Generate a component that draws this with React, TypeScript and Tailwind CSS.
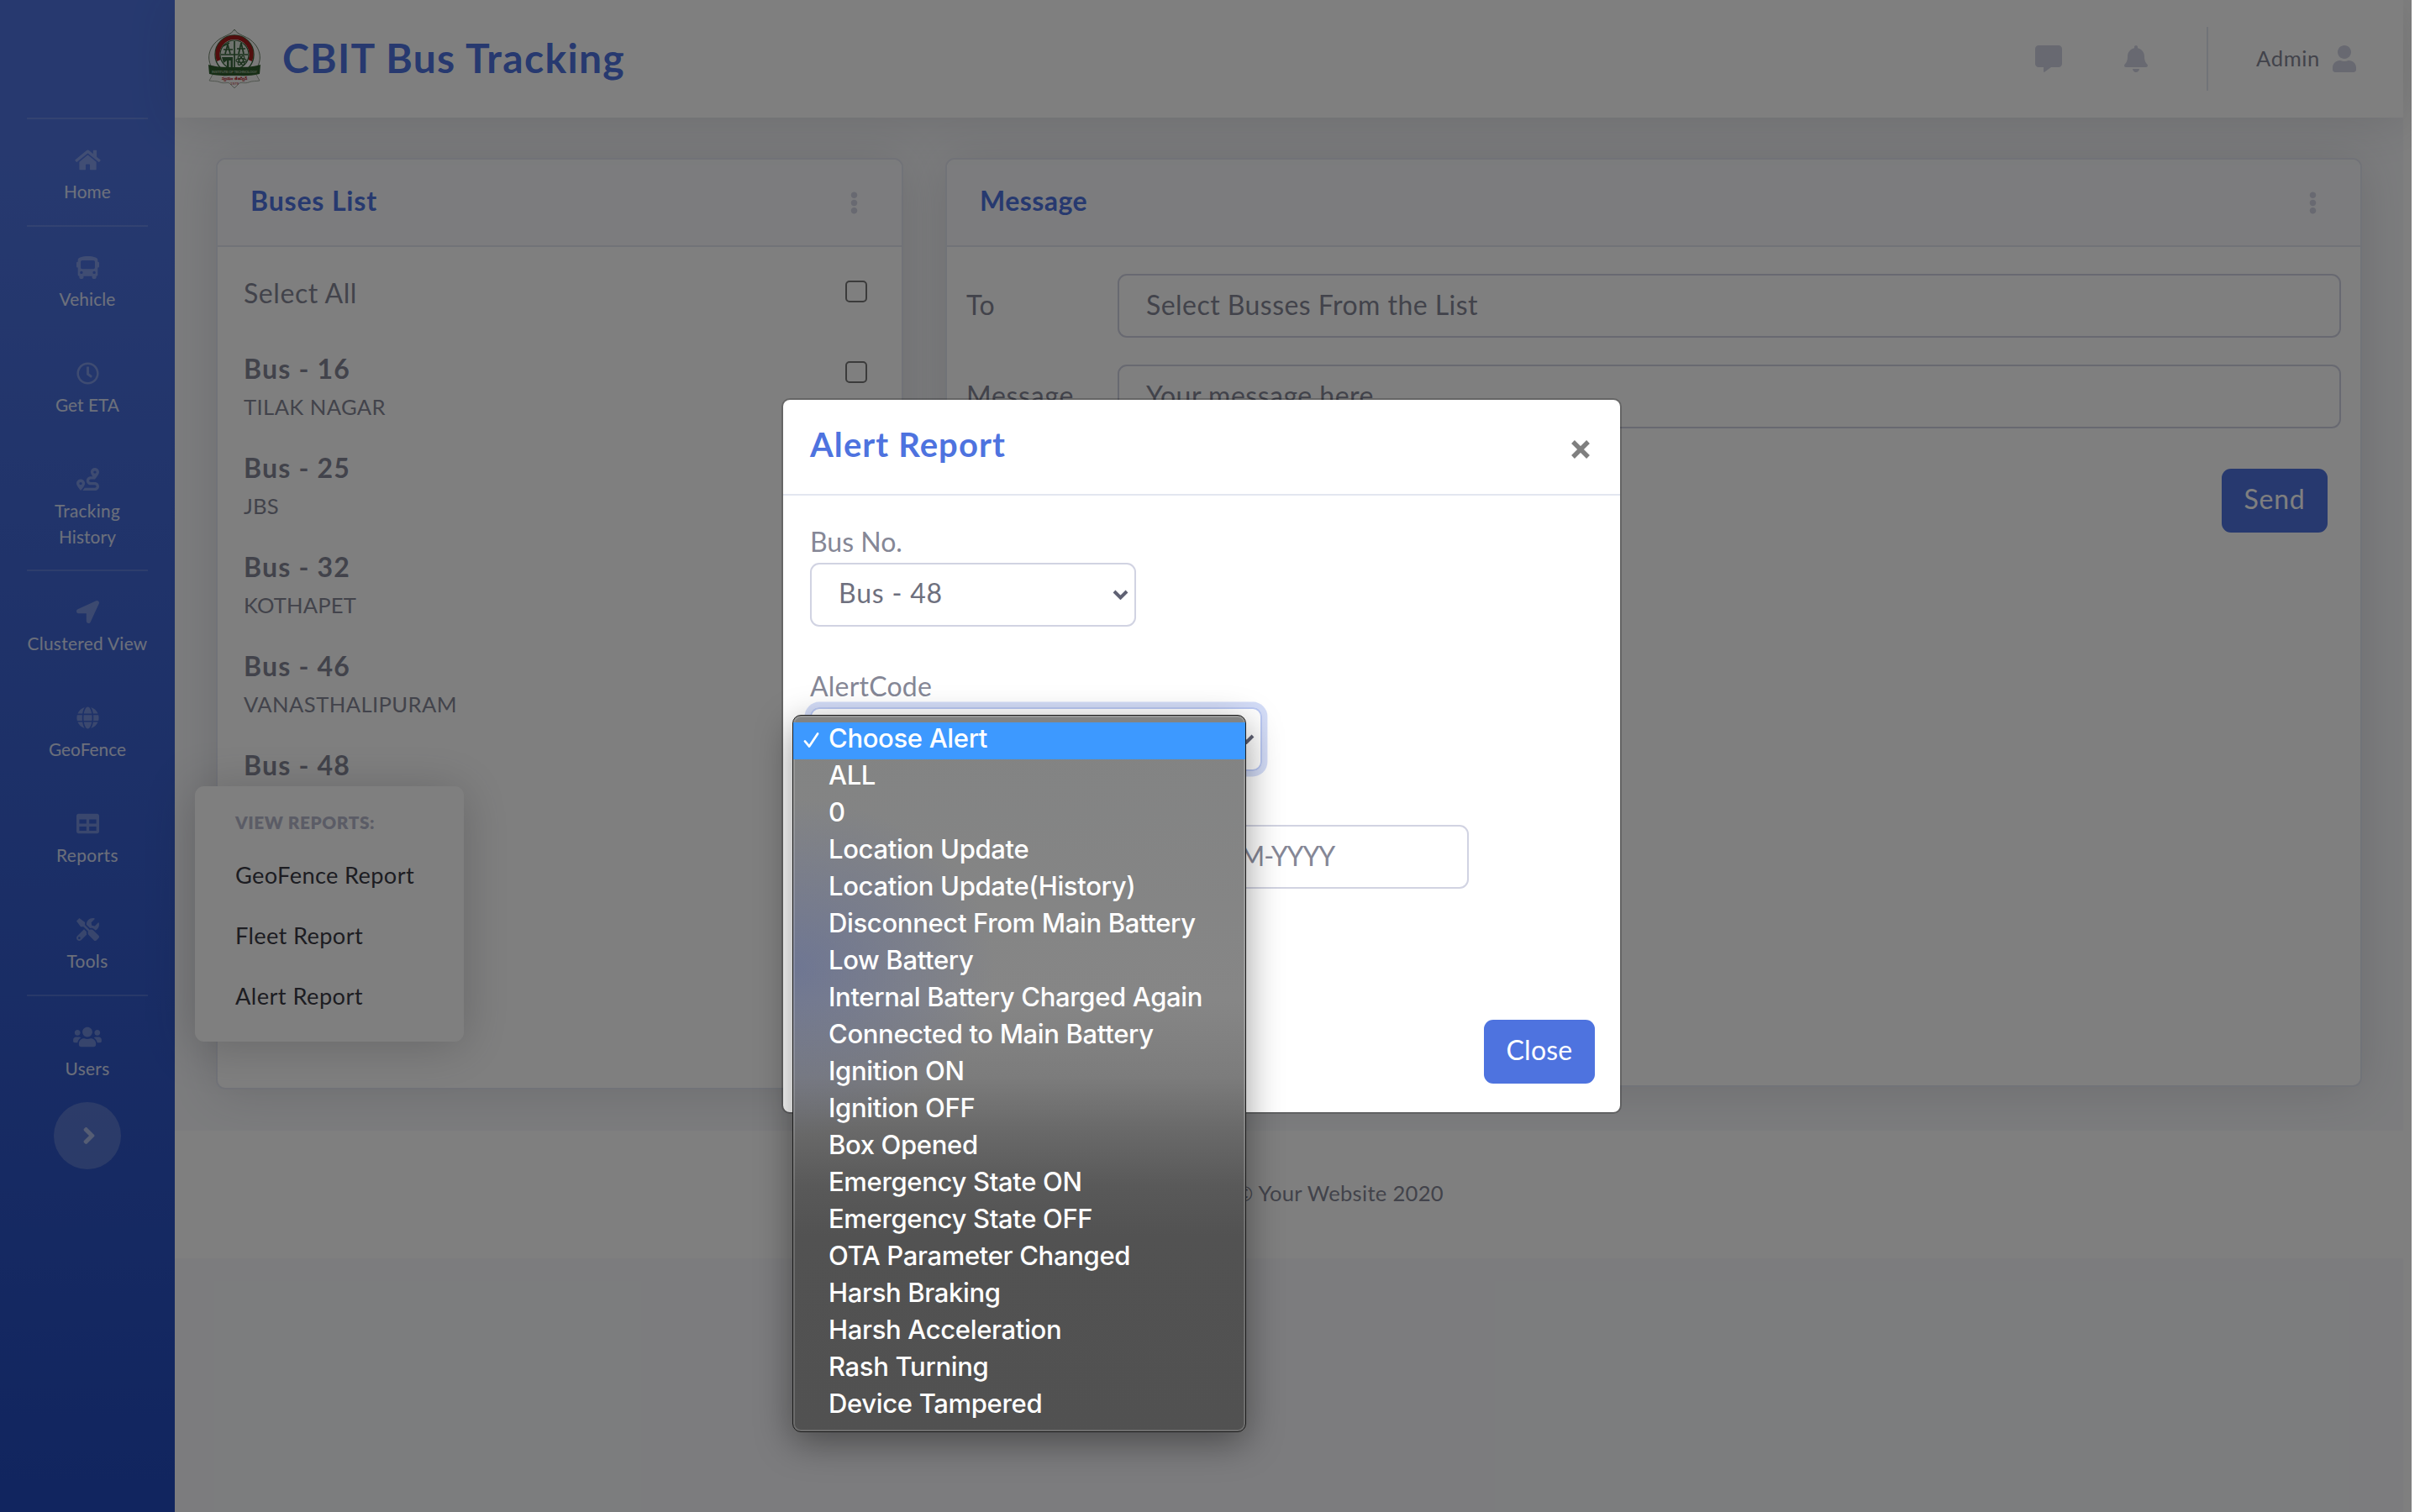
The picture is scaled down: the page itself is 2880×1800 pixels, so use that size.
import type { ReactNode } from "react";
import {
  FaAngleRight, FaBell, FaBus, FaCommentAlt, FaEllipsisV, FaGlobe, FaHome, FaLocationArrow,
  FaRegClock, FaRoute, FaTable, FaTools, FaUser, FaUsers,
} from "react-icons/fa";

function Logo() {
  return (
    <svg className="h-[72px] w-[66px]" viewBox="0 0 66 72">
      <path d="M33 1 C37 7 43 8 50 12 C62 20 68 34 59 48 L54 55 H12 L7 48 C-2 34 4 20 16 12 C23 8 29 7 33 1Z" fill="#f4f4f2" stroke="#6d8069" strokeWidth="1" />
      <circle cx="33" cy="31" r="23" fill="#fff" stroke="#37643a" strokeWidth="1.4" />
      <path d="M14.5 38 A20 20 0 1 1 51.5 38" fill="none" stroke="#a51d1c" strokeWidth="5" />
      <circle cx="33" cy="31" r="17" fill="#dfe6dc" stroke="#37643a" strokeWidth="1.2" />
      <path d="M17 31 H49 M33 15 V47 M22 30 L25 19 L28 30 M20 25 H31 M19 21 L27 17 M41 17 L38 30 M41 17 L44 30 M36 24 H46" fill="none" stroke="#37643a" strokeWidth="1.7" />
      <path d="M18 34 H31 V46 H28.5 V38 H26.5 V46 H24 V38 L20 41Z" fill="#37643a" />
      <ellipse cx="41" cy="38" rx="6" ry="2.3" fill="none" stroke="#37643a" strokeWidth="1.2" />
      <ellipse cx="41" cy="38" rx="6" ry="2.3" fill="none" stroke="#37643a" strokeWidth="1.2" transform="rotate(60 41 38)" />
      <ellipse cx="41" cy="38" rx="6" ry="2.3" fill="none" stroke="#37643a" strokeWidth="1.2" transform="rotate(-60 41 38)" />
      <path d="M8 53 L3 62 C7 63 12 62 16 64 C20 66 27 63 28 66 L33 71 L38 66 C39 63 46 66 50 64 C54 62 59 63 63 62 L58 53Z" fill="#f4f4f2" stroke="#8d998a" strokeWidth=".8" />
      <path d="M2 43 C12 46 22 46 33 46 C44 46 54 46 64 43 L63 54 C52 57 42 56 33 56 C24 56 14 57 3 54Z" fill="#2f5c2c" />
      <text x="33" y="53" textAnchor="middle" fontSize="4.4" fontWeight="700" fill="#9fb39a" fontFamily="Liberation Sans" textLength="54">INSTITUTE OF TECHNOLOGY</text>
      <text x="33" y="61" textAnchor="middle" fontSize="4.6" fontWeight="700" fill="#b3201f" fontFamily="Liberation Sans">స్వయం తేజస్విన్</text>
      <text x="33" y="67" textAnchor="middle" fontSize="4.4" fill="#b3201f" fontFamily="Liberation Sans">1979</text>
    </svg>
  );
}

const navLabel = "whitespace-nowrap text-[20.8px] leading-[31px] text-white/80";

function NavItem({ icon, label, tracking }: { icon: ReactNode; label: string; tracking: string }) {
  return (
    <a className="flex h-[126px] flex-col items-center pt-8">
      <span className="mb-[6px] flex h-8 items-center text-[27px] text-white/30">{icon}</span>
      <span className={navLabel + " " + tracking}>{label}</span>
    </a>
  );
}

const Rule = () => <div className="mx-8 h-[2px] shrink-0 bg-white/15" />;

function Sidebar() {
  return (
    <nav className="flex h-full w-[208px] shrink-0 flex-col bg-linear-to-b from-[#4e73df] from-10% to-[#224abe] to-100%">
      <div className="h-[140px] shrink-0" />
      <Rule />
      <NavItem icon={<FaHome className="h-[27px] w-[31px]" />} label="Home" tracking="tracking-[0.007em]" />
      <Rule />
      <NavItem icon={<FaBus />} label="Vehicle" tracking="tracking-[0.007em]" />
      <NavItem icon={<FaRegClock />} label="Get ETA" tracking="tracking-[0.002em]" />
      <a className="flex h-[156px] flex-col items-center pt-8">
        <span className="mb-[6px] flex h-8 items-center text-[27px] text-white/30"><FaRoute /></span>
        <span className={navLabel + " tracking-[0.014em]"}>Tracking</span>
        <span className={navLabel + " tracking-[0.005em]"}>History</span>
      </a>
      <Rule />
      <NavItem icon={<FaLocationArrow />} label="Clustered View" tracking="tracking-[0.016em]" />
      <NavItem icon={<FaGlobe />} label="GeoFence" tracking="tracking-[0.002em]" />
      <NavItem icon={<FaTable />} label="Reports" tracking="tracking-[0.022em]" />
      <NavItem icon={<FaTools />} label="Tools" tracking="tracking-[0.017em]" />
      <Rule />
      <NavItem icon={<FaUsers className="h-[27px] w-[34px]" />} label="Users" tracking="tracking-[0.016em]" />
      <div className="flex size-20 items-center justify-center self-center rounded-full bg-white/20 pl-1">
        <FaAngleRight className="h-8 w-5 text-white/50" />
      </div>
    </nav>
  );
}

function Topbar() {
  return (
    <header className="relative flex h-[140px] shrink-0 items-center bg-white pr-14 pl-[38px] shadow-[0_4.8px_56px_rgba(58,59,69,0.15)]">
      <Logo />
      <h1 className="ml-[24px] pb-[3px] text-[48px] font-bold tracking-[0.0276em] whitespace-nowrap text-[#4e73df]">CBIT Bus Tracking</h1>
      <FaCommentAlt className="ml-auto size-8 text-[#d1d3e2]" />
      <FaBell className="ml-[74px] h-8 w-7 text-[#d1d3e2]" />
      <div className="ml-[70px] h-[76px] w-[2px] bg-[#e3e6f0]" />
      <span className="ml-[57px] pb-[2px] text-[25.6px] tracking-[0.0245em] text-[#858796]">Admin</span>
      <FaUser className="ml-[15px] h-8 w-7 text-[#d1d3e2]" />
    </header>
  );
}

function CardHeader({ title, tracking }: { title: string; tracking: string }) {
  return (
    <div className="flex h-[104px] items-center justify-between rounded-t-[10px] border-b-2 border-[#e3e6f0] bg-[#f8f9fc] pr-[43px] pl-[39px]">
      <h6 className={"pb-[4px] text-[32px] font-bold whitespace-nowrap text-[#4e73df] " + tracking}>{title}</h6>
      <FaEllipsisV className="h-[27px] w-[27px] text-[#d1d3e2]" />
    </div>
  );
}

const buses = [
  { name: "Bus - 16", place: "TILAK NAGAR", tracking: "tracking-[0.0158em]" },
  { name: "Bus - 25", place: "JBS", tracking: "tracking-[0.0098em]" },
  { name: "Bus - 32", place: "KOTHAPET", tracking: "tracking-[0.006em]" },
  { name: "Bus - 46", place: "VANASTHALIPURAM", tracking: "tracking-[0.0166em]" },
  { name: "Bus - 48", place: "", tracking: "" },
];

const Check = () => <span className="size-[26px] rounded-[5px] border-2 border-[#767676] bg-white" />;

const card = "rounded-[11px] border-2 border-[#e3e6f0] bg-white shadow-[0_4.8px_56px_rgba(58,59,69,0.15)]";

function BusesCard() {
  return (
    <section className={"h-[1109px] w-[818px] " + card}>
      <CardHeader title="Buses List" tracking="tracking-[0.0264em]" />
      <div className="flex flex-col pt-[31px] pr-[41px] pl-[31px] text-[#858796]">
        <div className="mb-[42px] flex h-12 items-start justify-between text-[32px] leading-[48px]">
          <span className="tracking-[0.0182em]">Select All</span>
          <span className="flex pt-[9px]"><Check /></span>
        </div>
        {buses.map((bus) => (
          <div key={bus.name} className="flex h-[118px] items-start justify-between">
            <div className="flex flex-col items-start">
              <span className="text-[32px] leading-[48px] font-bold tracking-[0.037em]">{bus.name}</span>
              <span className={"mt-[2px] text-[25.6px] leading-[38px] " + bus.tracking}>{bus.place}</span>
            </div>
            <span className="flex pt-[15px]"><Check /></span>
          </div>
        ))}
      </div>
    </section>
  );
}

const field = "flex h-[76px] items-center rounded-[11px] border-2 border-[#d1d3e2] bg-white px-8 pb-[3px] whitespace-nowrap";

function MessageCard() {
  return (
    <section className={"h-[1106px] w-[1686px] " + card}>
      <CardHeader title="Message" tracking="tracking-[0.0138em]" />
      <div className="flex flex-col gap-8 pt-8 pr-[23px] pl-[23px] text-[32px] text-[#858796]">
        <div className="flex items-center">
          <span className="w-[180px] pb-[3px] tracking-[0.0134em]">To</span>
          <div className={"flex-1 tracking-[0.0143em] " + field}>Select Busses From the List</div>
        </div>
        <div className="flex items-center">
          <span className="w-[180px] pb-[3px] tracking-[0.0223em]">Message</span>
          <div className={"flex-1 tracking-[0.0155em] " + field}>Your message here</div>
        </div>
        <button className="mt-4 mr-4 flex h-[76px] w-[126px] items-center justify-center self-end rounded-[11px] bg-[#4e73df] pb-[4px] tracking-[0.0239em] text-white">Send</button>
      </div>
    </section>
  );
}

function ReportsMenu() {
  return (
    <div className="absolute top-[936px] left-[232px] flex h-[304px] w-[320px] flex-col rounded-[11px] bg-white pt-7 pl-12 shadow-[0_4.8px_56px_rgba(58,59,69,0.25)]">
      <h6 className="mb-3 text-[20.8px] leading-[30px] font-extrabold tracking-[0.0261em] text-[#b7b9cc]">VIEW REPORTS:</h6>
      <a className="text-[27.2px] leading-[72px] tracking-[0.0132em] text-[#3a3b45]">GeoFence Report</a>
      <a className="text-[27.2px] leading-[72px] tracking-[0.0133em] text-[#3a3b45]">Fleet Report</a>
      <a className="text-[27.2px] leading-[72px] tracking-[0.0168em] text-[#3a3b45]">Alert Report</a>
    </div>
  );
}

const Caret = () => (
  <svg className="ml-auto h-[12px] w-[19px]" viewBox="0 0 19 12">
    <path d="M2 2 L9.5 9.5 L17 2" fill="none" stroke="#5f6173" strokeWidth="4" />
  </svg>
);

function AlertModal() {
  return (
    <div className="absolute top-[474px] left-[930px] flex h-[852px] w-[1000px] flex-col rounded-[10px] border-2 border-black/20 bg-white bg-clip-padding text-[32px] text-[#858796]">
      <div className="flex h-[114px] shrink-0 items-start justify-between border-b-2 border-[#e3e6f0] pt-[23px] pr-[35px] pl-8">
        <h5 className="text-[40px] leading-[60px] font-bold tracking-[0.0275em] text-[#4e73df]">Alert Report</h5>
        <svg className="mt-[24px] size-[24px]" viewBox="0 0 24 24">
          <path d="M3 3 L21 21 M21 3 L3 21" stroke="#7f7f7f" strokeWidth="5.4" />
        </svg>
      </div>
      <div className="flex flex-col items-start pt-[31px] pr-[30px] pl-8">
        <label className="mb-px h-12 leading-[48px]">Bus No.</label>
        <div className="flex h-[76px] w-[388px] items-center rounded-[11px] border-2 border-[#d1d3e2] pr-[7px] pl-8 text-[#6e707e]">
          <span className="pb-[4px] tracking-[0.0256em]">Bus - 48</span>
          <Caret />
        </div>
        <label className="mt-[47px] mb-px h-12 leading-[48px] tracking-[0.0063em]">AlertCode</label>
        <div className="flex h-[76px] w-[538px] items-center rounded-[11px] border-2 border-[#bac8f3] pr-[7px] pl-8 shadow-[0_0_0_6.4px_rgba(78,115,223,0.25)]">
          <Caret />
        </div>
        <div className="mt-16 flex gap-[18px]">
          <div className={"w-[374px] " + field} />
          <div className={"w-[392px] tracking-[-0.0365em] " + field}>DD-MM-YYYY</div>
        </div>
        <button className="mt-[156px] flex h-[76px] w-[132px] items-center justify-center self-end rounded-[11px] bg-[#4e73df] pb-[4px] tracking-[0.0073em] text-white">Close</button>
      </div>
    </div>
  );
}

const alerts = [
  "Choose Alert", "ALL", "0", "Location Update", "Location Update(History)", "Disconnect From Main Battery",
  "Low Battery", "Internal Battery Charged Again", "Connected to Main Battery", "Ignition ON", "Ignition OFF",
  "Box Opened", "Emergency State ON", "Emergency State OFF", "OTA Parameter Changed", "Harsh Braking",
  "Harsh Acceleration", "Rash Turning", "Device Tampered",
];

function AlertOptions() {
  return (
    <ul className="absolute top-[851px] left-[943px] h-[854px] w-[540px] rounded-[10px] border border-[#1c1c1c] bg-[radial-gradient(ellipse_240px_200px_at_0px_300px,rgba(95,108,155,0.6),rgba(95,108,155,0)),linear-gradient(to_bottom,#828383_0px,#868686_340px,#7c7c7c_430px,#6a6a6a_490px,#595959_560px,#525252_620px,#515151_854px)] pt-2 font-['Inter'] text-[31px] font-medium tracking-[-0.0108em] whitespace-nowrap text-white shadow-[inset_0_0_0_2px_rgba(255,255,255,0.16),0_12px_44px_rgba(0,0,0,0.4)]">
      {alerts.map((name, i) => (
        <li key={name} className={i === 0 ? "flex h-11 items-center bg-[#3d99ff] pb-[5px]" : "flex h-11 items-center pb-[5px]"}>
          <span className="flex w-[42px] justify-center pt-[3px]">
            {i === 0 && (
              <svg className="h-[20px] w-[19px]" viewBox="0 0 20 20">
                <path d="M2 11.5 L7.5 18 L18 2" fill="none" stroke="#fff" strokeWidth="2.8" strokeLinecap="round" strokeLinejoin="round" />
              </svg>
            )}
          </span>
          {name}
        </li>
      ))}
    </ul>
  );
}

export default function App() {
  return (
    <div className="h-[1800px] w-[2880px] overflow-hidden bg-white font-['Lato',sans-serif]">
      <div className="relative flex h-[1800px] w-[2870px] overflow-hidden bg-white">
        <Sidebar />
        <div className="flex w-[2652px] flex-col bg-[#f8f9fc]">
          <Topbar />
          <main className="flex h-[1206px] shrink-0 items-start gap-[50px] pt-12 pl-[49px]">
            <BusesCard />
            <MessageCard />
          </main>
          <footer className="relative flex h-[152px] shrink-0 items-center justify-center bg-white pb-[3px] text-[25.6px] tracking-[0.0113em] text-[#858796]">
            Copyright © Your Website 2020
          </footer>
        </div>
        <ReportsMenu />
        <div className="absolute inset-0 bg-black/50" />
        <AlertModal />
        <AlertOptions />
      </div>
    </div>
  );
}
